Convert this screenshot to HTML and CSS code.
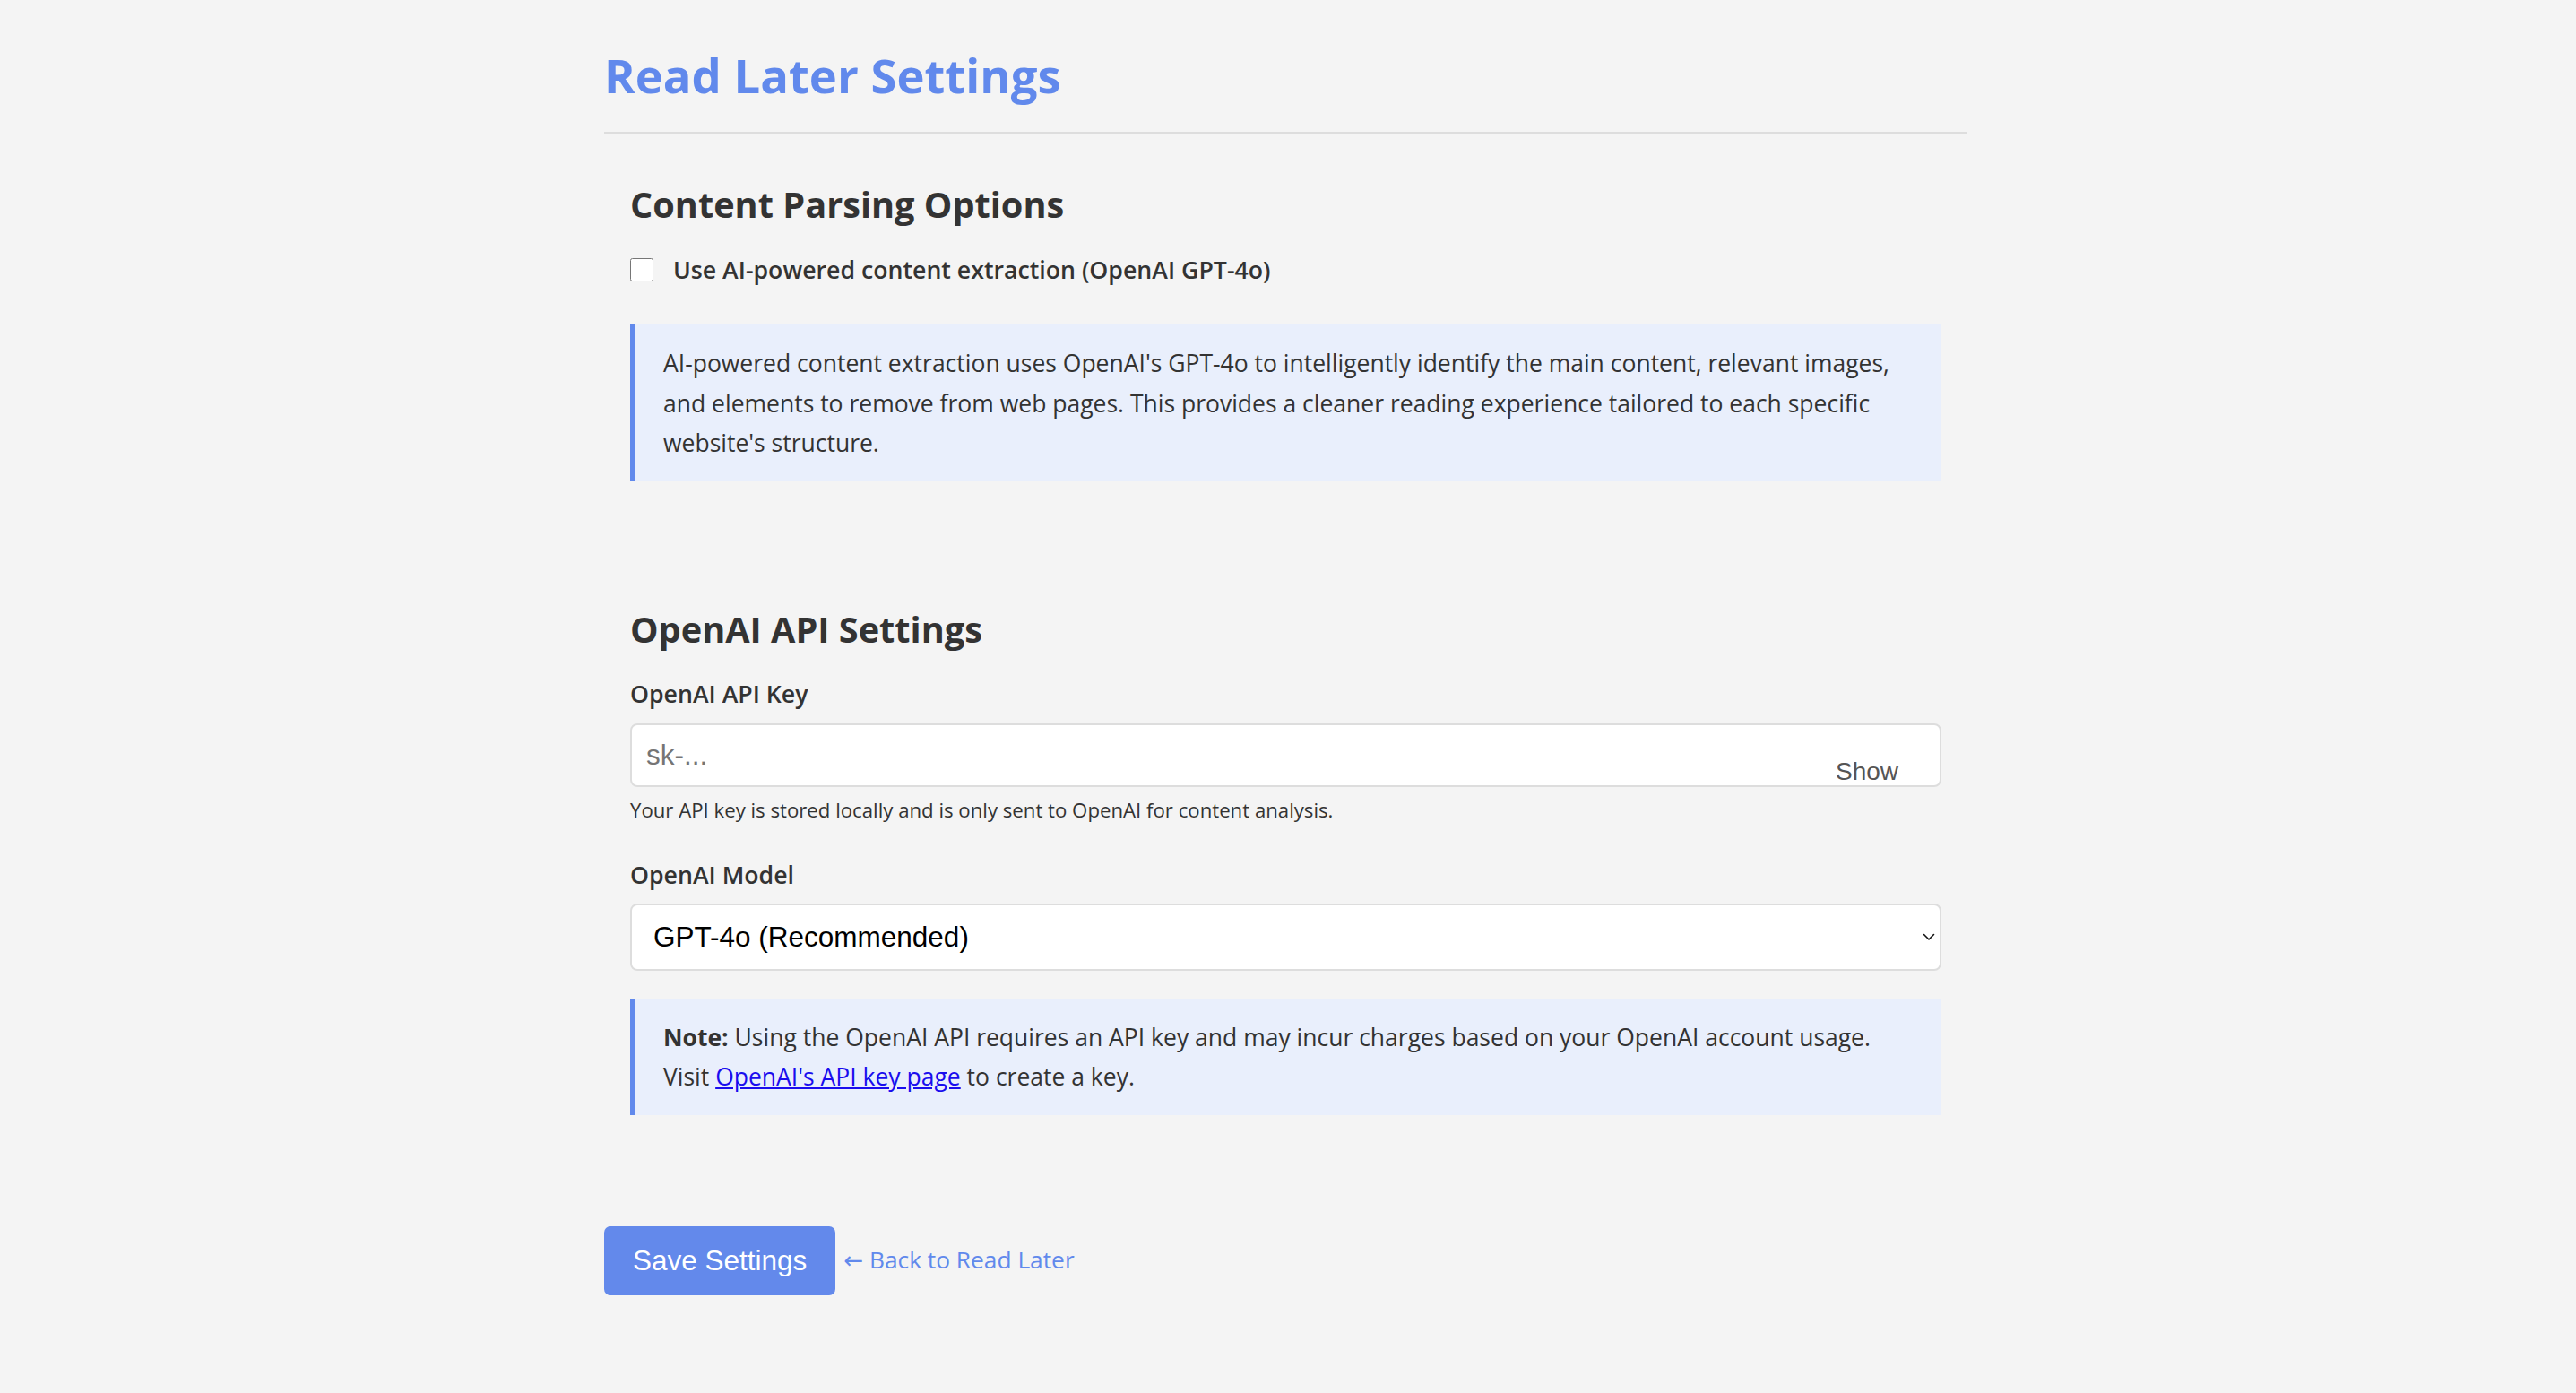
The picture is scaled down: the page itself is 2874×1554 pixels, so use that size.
FILE: index.html
```html
<!DOCTYPE html>
<html lang="en">
<head>
<meta charset="utf-8">
<title>Read Later Settings</title>
<link rel="stylesheet" href="styles.css">
</head>
<body>
<div class="container">
  <h1 class="page-title">Read Later Settings</h1>

  <section class="section section-parsing">
    <h2 class="section-title">Content Parsing Options</h2>
    <label class="checkbox-row">
      <input type="checkbox" class="checkbox">
      <span class="checkbox-label">Use AI-powered content extraction (OpenAI GPT-4o)</span>
    </label>
    <div class="info-box info-box-desc">
      <p>AI-powered content extraction uses OpenAI's GPT-4o to intelligently identify the main content, relevant images, and elements to remove from web pages. This provides a cleaner reading experience tailored to each specific website's structure.</p>
    </div>
  </section>

  <section class="section section-api">
    <h2 class="section-title">OpenAI API Settings</h2>
    <label class="field-label" for="api-key">OpenAI API Key</label>
    <div class="input-wrap">
      <input id="api-key" class="text-input" type="password" placeholder="sk-...">
      <button type="button" class="show-btn">Show</button>
    </div>
    <p class="help-text">Your API key is stored locally and is only sent to OpenAI for content analysis.</p>

    <label class="field-label field-label-model" for="model">OpenAI Model</label>
    <div class="select-wrap">
      <select id="model" class="select-input">
        <option>GPT-4o (Recommended)</option>
        <option>GPT-4o mini</option>
      </select>
      <svg class="select-chevron" width="14" height="9" viewBox="0 0 14 9" aria-hidden="true">
        <path d="M1.5 1.5 L7 7 L12.5 1.5" fill="none" stroke="#111" stroke-width="1.6" stroke-linecap="round" stroke-linejoin="round"/>
      </svg>
    </div>

    <div class="info-box info-box-note">
      <p><strong>Note:</strong> Using the OpenAI API requires an API key and may incur charges based on your OpenAI account usage. Visit <a href="#" class="note-link">OpenAI's API key page</a> to create a key.</p>
    </div>
  </section>

  <div class="actions">
    <button type="button" class="save-btn">Save Settings</button>
    <a href="#" class="back-link"><span class="arrow">←</span> Back to Read Later</a>
  </div>
</div>
</body>
</html>
```

FILE: styles.css
```css
html, body {
  margin: 0;
  padding: 0;
  background: #f4f4f4;
}

body {
  font-family: "Open Sans", "Noto Sans", sans-serif;
  color: #333333;
  font-size: 26.5px;
  line-height: 1.7;
}

.container {
  width: 1521px;
  padding-right: 5px;
  margin: 0 auto;
  padding-top: 50px;
}

.page-title {
  margin: 0;
  font-size: 52.6px;
  line-height: 67px;
  font-weight: 700;
  color: #6189ec;
  padding-bottom: 30px;
  border-bottom: 2px solid #dddddd;
}

.section {
  padding: 0 29px;
}

.section-title {
  margin: 0;
  font-size: 39.7px;
  line-height: 50px;
  font-weight: 700;
  color: #333333;
}

.section-parsing {
  padding-top: 54px;
}

.checkbox-row {
  display: flex;
  align-items: center;
  gap: 22px;
  margin-top: 25px;
  height: 45px;
}

.checkbox {
  width: 26px;
  height: 26px;
  margin: 0;
  flex: none;
}

.checkbox-label {
  font-weight: 600;
  font-size: 26.7px;
}

.info-box {
  background: #e9effc;
  border-left: 6px solid #6189ec;
  padding: 21px 28px 20px 31px;
}

.info-box p {
  margin: 0;
  line-height: 44.5px;
}

.info-box-desc {
  margin-top: 39px;
}

.section-api {
  padding-top: 140px;
}

.field-label {
  display: block;
  font-weight: 600;
  font-size: 26.7px;
  line-height: 45px;
  margin-top: 24px;
}

.input-wrap {
  position: relative;
  margin-top: 11px;
}

.text-input {
  display: block;
  box-sizing: border-box;
  width: 100%;
  height: 71px;
  border: 2px solid #dddddd;
  border-radius: 8px;
  background: #ffffff;
  padding: 0 16px;
  font-family: "Liberation Sans", Arial, sans-serif;
  font-size: 31.5px;
  color: #333333;
  outline: none;
}

.text-input::placeholder {
  color: #757575;
}

.show-btn {
  position: absolute;
  right: 48px;
  top: 38px;
  border: 0;
  background: transparent;
  padding: 0;
  font-family: "Liberation Sans", Arial, sans-serif;
  font-size: 28px;
  line-height: 32px;
  color: #555555;
  cursor: pointer;
}

.help-text {
  margin: 6px 0 0;
  font-size: 22.2px;
  line-height: 39px;
  color: #333333;
}

.field-label-model {
  margin-top: 30px;
}

.select-wrap {
  position: relative;
  margin-top: 10px;
}

.select-input {
  display: block;
  box-sizing: border-box;
  width: 100%;
  height: 75px;
  border: 2px solid #dddddd;
  border-radius: 8px;
  background: #ffffff;
  padding: 0 40px 0 24px;
  font-family: "Liberation Sans", Arial, sans-serif;
  font-size: 31.5px;
  color: #000000;
  appearance: none;
  -webkit-appearance: none;
}

.select-chevron {
  position: absolute;
  right: 7px;
  top: 33px;
  pointer-events: none;
}

.info-box-note {
  margin-top: 31px;
}

.note-link {
  color: #1a0dee;
  text-decoration: underline;
}

.actions {
  display: flex;
  align-items: center;
  gap: 9px;
  margin-top: 124px;
  padding-bottom: 100px;
}

.save-btn {
  border: 0;
  border-radius: 7px;
  background: #6389eb;
  color: #ffffff;
  font-family: "Liberation Sans", Arial, sans-serif;
  font-size: 31.5px;
  line-height: 37px;
  padding: 20px 32px;
  cursor: pointer;
}

.back-link {
  color: #6189ec;
  text-decoration: none;
  font-size: 26.3px;
}

.arrow {
  font-family: "DejaVu Sans", sans-serif;
  font-size: 26px;
}
```
